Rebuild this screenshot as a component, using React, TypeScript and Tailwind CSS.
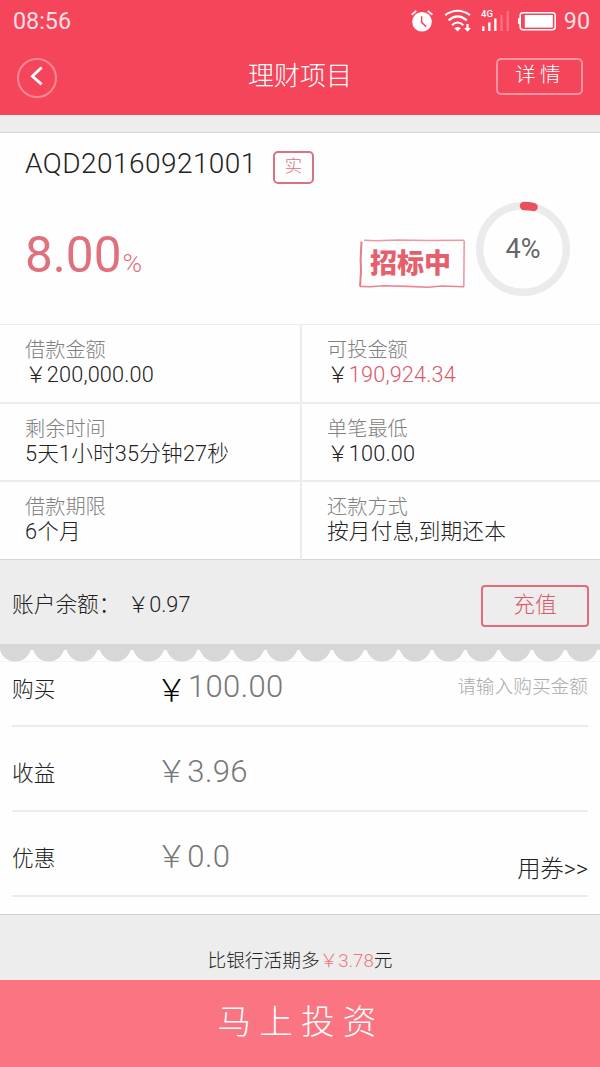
import React from "react";

function AlarmIcon() {
  return (
    <svg width="22" height="22" viewBox="0 0 22 22" fill="none">
      <circle cx="11" cy="11.8" r="9.8" fill="#fff" />
      <path d="M1.2 4.2 4.6 1.4M20.8 4.2 17.4 1.4" stroke="#ffe4e8" strokeWidth="2" strokeLinecap="round" />
      <path d="M10.6 6.2v6.2l4.6 4.3" stroke="#f5455b" strokeWidth="1.5" />
    </svg>
  );
}

function WifiIcon() {
  return (
    <svg width="28" height="24" viewBox="0 0 28 24" fill="none">
      <path d="M1.2 6.2Q13.5-2.6 26 6.2" stroke="#fff" strokeWidth="2.1" />
      <path d="M4.6 11.4Q13.6 3.4 22.8 11.4" stroke="#fff" strokeWidth="2.1" />
      <path d="M8 16.2Q13.6 10.8 19.4 16.2" stroke="#fff" strokeWidth="2.1" />
      <path d="M10.4 19.2Q13.6 16.6 16.8 19.2L13.6 22.6Z" fill="#fff" />
      <path d="M22.3 15h2.4v4h2.2l-3.4 3.8-3.4-3.8h2.2Z" fill="#fff" />
    </svg>
  );
}

function SignalIcon() {
  return (
    <svg width="30" height="24" viewBox="0 0 30 24">
      <text x="0" y="7.6" fontFamily="Roboto, sans-serif" fontSize="9.5" fontWeight="500" fill="#fff">
        4G
      </text>
      <path d="M1.2 17.2h2.3V22H1.2ZM7.2 13.4h2.3V22H7.2ZM13.2 9.4h2.3V22h-2.3Z" fill="#fff" />
      <path d="M19.4 6h2.2v16h-2.2ZM25.6 2h2.2v20h-2.2Z" fill="#fff" opacity=".25" />
    </svg>
  );
}

function BatteryIcon() {
  return (
    <svg width="39" height="20" viewBox="0 0 39 20" fill="none">
      <rect x="2.2" y="1.7" width="35" height="17" rx="2.6" stroke="#fff" strokeWidth="1.6" />
      <rect x="0" y="7" width="2.4" height="6.2" rx="1" fill="#fff" />
      <rect x="6.8" y="4" width="28" height="12.6" fill="#fff" />
    </svg>
  );
}

function StatusBar() {
  return (
    <div className="flex h-10 items-start pl-[13px] pr-[10px] pt-[7px] text-[#ffdfe4]">
      <span className="text-[23.3px] font-normal leading-[28px]">08:56</span>
      <div className="ml-auto flex items-start">
        <div className="mr-[11px] mt-[3px]"><AlarmIcon /></div>
        <div className="mr-[9px] mt-[2px]"><WifiIcon /></div>
        <div className="mr-[7px] mt-[2px]"><SignalIcon /></div>
        <div className="mr-[7px] mt-[4px]"><BatteryIcon /></div>
        <span className="text-[23.3px] font-normal leading-[28px]">90</span>
      </div>
    </div>
  );
}

function TitleBar() {
  return (
    <header className="grid h-[75px] grid-cols-[1fr_auto_1fr] items-start pl-[17px] pr-[17px] text-white">
      <button className="mt-[18px] flex h-[40px] w-[40px] items-center justify-center rounded-full border-2 border-[#f98896]">
        <svg className="mb-1" width="14" height="22" viewBox="0 0 14 22" fill="none">
          <path d="M11.6 2.6 2.4 11.2l9.2 8.2" stroke="#fff" strokeWidth="2.8" />
        </svg>
      </button>
      <h1 className="mt-[21px] text-[26px] leading-[30px]">理财项目</h1>
      <button className="mt-[18px] h-[37px] w-[87px] justify-self-end rounded-[5px] border-2 border-[#fa95a2] pl-[17px] text-left text-[20.6px] leading-[30px] tracking-[4.4px]">
        <span className="block h-[33px]">详情</span>
      </button>
    </header>
  );
}

function ProgressRing() {
  return (
    <div className="grid h-[96px] w-[96px] place-items-center">
      <svg className="col-start-1 row-start-1" width="96" height="96" viewBox="0 0 96 96" fill="none">
        <circle cx="48" cy="48" r="43.3" stroke="#ebebeb" strokeWidth="7.4" />
        <path d="M49 5A43.3 43.3 0 0 1 58.6 6" stroke="#e9505f" strokeWidth="8.4" strokeLinecap="round" />
      </svg>
      <span className="col-start-1 row-start-1 text-[27px] font-normal leading-[30px] text-[#666]">4%</span>
    </div>
  );
}

function Stamp() {
  return (
    <div className="grid h-[50px] w-[108px]">
      <svg className="col-start-1 row-start-1" width="108" height="50" viewBox="0 0 108 50" fill="none">
        <path d="M3.5 2.5 2.6 20 3 32 2 47.5" stroke="#e87b86" strokeWidth="2" />
        <path d="M106.2 1.5 105.8 48" stroke="#ee9aa3" strokeWidth="1.6" />
        <path d="M6 1.2 18 1.8 40 .9 70 1.6 106 1.2" stroke="#ee99a2" strokeWidth="1.5" />
        <path d="M2 47.4 12 47.8 26 46.8 50 47.4 70 48.2 84 47 106 47.8" stroke="#ea8690" strokeWidth="1.6" />
      </svg>
      <span className="col-start-1 row-start-1 pl-[12px] pt-px text-[27px] font-black leading-[48px] text-[#e5606d]">
        招标中
      </span>
    </div>
  );
}

function Summary() {
  return (
    <section className="flex h-[192px] flex-col border-t border-[#d6d6d6] bg-[#fefefe] pl-[25px]">
      <div className="flex items-start pt-[13px]">
        <span className="w-[248px] text-[28px] leading-[36px] tracking-[0.45px] text-[#222]">AQD20160921001</span>
        <span className="mt-[5px] h-[33px] w-[41px] rounded-[5px] border-2 border-[#d9737f] text-center text-[17.5px] leading-[26px] text-[#d9737f]">
          实
        </span>
      </div>
      <div className="flex items-start">
        <div className="mt-[41px] w-[333px] leading-[60px] text-[#e0707c]">
          <span className="text-[49.5px] font-normal">8.00</span>
          <span className="pl-px text-[26.5px]">%</span>
        </div>
        <div className="mt-[55px]"><Stamp /></div>
        <div className="ml-[9px] mt-[17px]"><ProgressRing /></div>
      </div>
    </section>
  );
}

function Cell({ label, children }: { label: string; children: React.ReactNode }) {
  return (
    <div className="pt-[13px]">
      <div className="text-[20.2px] leading-[24px] text-[#808080]">{label}</div>
      <div className="text-[21.7px] leading-[26px] tracking-[0.15px] text-[#222]">{children}</div>
    </div>
  );
}

function Facts() {
  const left = "pl-[25px]";
  const right = "border-l-2 pl-[25px]";
  const line = "border-b-2 border-[#ececec]";
  const last = "border-b border-b-[#d4d4d4] border-l-[#ececec]";
  return (
    <section className="grid h-[235px] grid-cols-2 grid-rows-[79px_78px_78px] bg-[#fefefe]">
      <div className={`${left} ${line}`}><Cell label="借款金额">￥200,000.00</Cell></div>
      <div className={`${right} ${line}`}>
        <Cell label="可投金额">￥<span className="text-[#d9596a]">190,924.34</span></Cell>
      </div>
      <div className={`${left} ${line}`}><Cell label="剩余时间">5天1小时35分钟27秒</Cell></div>
      <div className={`${right} ${line}`}><Cell label="单笔最低">￥100.00</Cell></div>
      <div className={`${left} ${last}`}><Cell label="借款期限">6个月</Cell></div>
      <div className={`${right} ${last}`}><Cell label="还款方式">按月付息,到期还本</Cell></div>
    </section>
  );
}

function Scallops() {
  return (
    <svg className="block shrink-0" width="600" height="18" viewBox="0 0 600 18">
      <rect width="600" height="18" fill="#fefefe" />
      <rect y="17" width="600" height="1" fill="#f3f3f3" />
      <rect width="600" height="7" fill="#d7d7d7" />
      {Array.from({ length: 19 }, (_, i) => (
        <circle key={i} cx={-1.35 + i * 33.33} cy="8.4" r="2.6" fill="#fefefe" />
      ))}
      {Array.from({ length: 19 }, (_, i) => (
        <circle key={`c${i}`} cx={15.3 + i * 33.33} cy="1.8" r="15.8" fill="#d7d7d7" />
      ))}
      <rect width="600" height="5.6" fill="#d7d7d7" />
    </svg>
  );
}

function Balance() {
  return (
    <section className="flex h-[84px] items-start justify-between bg-[#ededed] pl-[12px] pr-[11px]">
      <span className="pt-[31px] text-[21.7px] leading-[28px] text-[#222]">
        账户余额：<span className="pl-[7px]">￥0.97</span>
      </span>
      <button className="mt-[25px] h-[42px] w-[108px] rounded-[4px] border-2 border-[#df6c78] text-[21.7px] leading-[35px] text-[#d9596a]">
        <span className="block h-[38px]">充值</span>
      </button>
    </section>
  );
}

function Order() {
  const row = "flex items-start border-b-2 border-[#ececec] text-[#222]";
  const label = "w-[144px] text-[21.7px] leading-[28px]";
  const amount = "text-[31px] leading-[36px] tracking-[0.35px] text-[#777]";
  return (
    <section className="h-[254px] border-b border-[#d0d0d0] bg-[#fefefe] px-[12px]">
      <div className={`h-[65px] ${row}`}>
        <span className={`pt-[14.5px] ${label}`}>购买</span>
        <span className="w-[32px] pt-[11px] text-[31px] leading-[36px] text-black">￥</span>
        <span className={`pt-[7.5px] ${amount}`}>100.00</span>
        <span className="ml-auto pt-[12px] text-[18.7px] leading-[27px] text-[#aaa]">请输入购买金额</span>
      </div>
      <div className={`h-[85px] ${row}`}>
        <span className={`pt-[33px] ${label}`}>收益</span>
        <span className={`pt-[27px] ${amount}`}>￥3.96</span>
      </div>
      <div className={`h-[85px] ${row}`}>
        <span className={`pt-[33px] ${label}`}>优惠</span>
        <span className={`pt-[27px] ${amount}`}>￥0.0</span>
        <span className="ml-auto pt-[43px] text-[23.3px] leading-[28px]">用券&gt;&gt;</span>
      </div>
    </section>
  );
}

export default function App() {
  return (
    <main className="flex h-[1067px] w-[600px] flex-col overflow-hidden bg-[#ededed] font-['Roboto','Noto_Sans_CJK_SC',sans-serif] font-light">
      <div className="mb-[17px] h-[115px] bg-[#f5455b]">
        <StatusBar />
        <TitleBar />
      </div>
      <Summary />
      <div className="h-[1px]" />
      <Facts />
      <Balance />
      <Scallops />
      <Order />
      <p className="h-[65px] pt-[33px] text-center text-[18.7px] leading-[27px] text-[#222]">
        比银行活期多<span className="text-[#f07680]">￥3.78</span>元
      </p>
      <button className="h-[87px] bg-[#fb7481] pl-[2px] text-[33.6px] leading-[44px] tracking-[8.2px] text-white">
        <span className="block h-[45px]">马上投资</span>
      </button>
    </main>
  );
}
